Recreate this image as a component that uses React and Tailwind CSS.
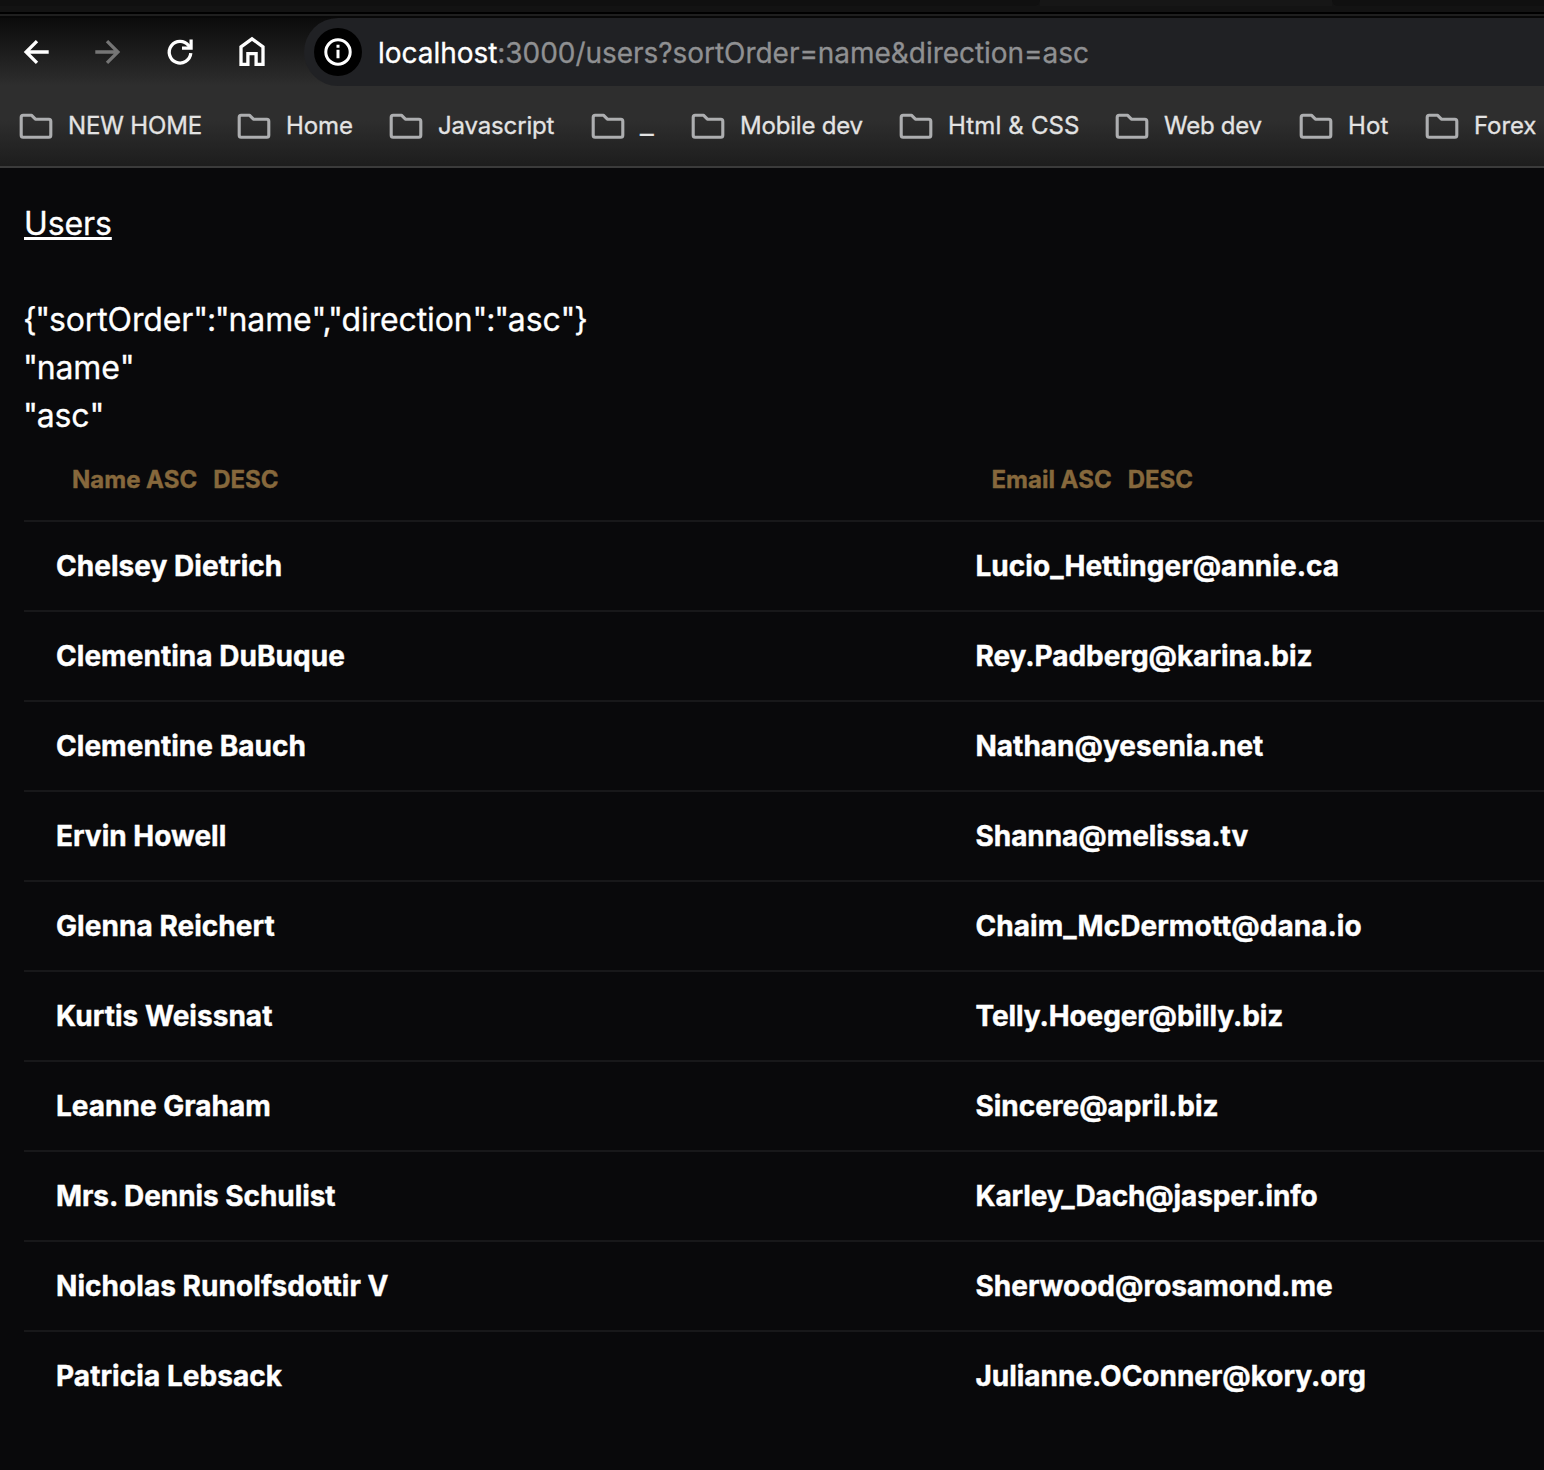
const bookmarks = [
  { label: 'NEW HOME', box: 'w-[218px]', text: 'tracking-[-0.15px]' },
  { label: 'Home', box: 'w-[152px]', text: 'tracking-[-0.1px]' },
  { label: 'Javascript', box: 'w-[202px]', text: 'tracking-[-0.15px]' },
  { label: '_', box: 'w-[100px]', text: 'origin-left scale-x-125' },
  { label: 'Mobile dev', box: 'w-[208px]', text: 'tracking-[-0.2px]' },
  { label: 'Html & CSS', box: 'w-[216px]', text: 'tracking-[0.15px]' },
  { label: 'Web dev', box: 'w-[184px]', text: 'tracking-[-0.25px]' },
  { label: 'Hot', box: 'w-[126px]', text: 'tracking-[0.15px]' },
  { label: 'Forex', box: 'w-[118px]', text: 'tracking-[-0.1px]' },
];

const users = [
  ['Chelsey Dietrich', 'Lucio_Hettinger@annie.ca', 'tracking-[0.04px]', 'tracking-[0.03px]'],
  ['Clementina DuBuque', 'Rey.Padberg@karina.biz', 'tracking-[0.04px]', 'tracking-[-0.06px]'],
  ['Clementine Bauch', 'Nathan@yesenia.net', 'tracking-[0.04px]', 'tracking-normal'],
  ['Ervin Howell', 'Shanna@melissa.tv', 'tracking-normal', 'tracking-[-0.06px]'],
  ['Glenna Reichert', 'Chaim_McDermott@dana.io', 'tracking-[0.05px]', 'tracking-[0.04px]'],
  ['Kurtis Weissnat', 'Telly.Hoeger@billy.biz', 'tracking-[0.03px]', 'tracking-[-0.1px]'],
  ['Leanne Graham', 'Sincere@april.biz', 'tracking-normal', 'tracking-[-0.04px]'],
  ['Mrs. Dennis Schulist', 'Karley_Dach@jasper.info', 'tracking-[-0.06px]', 'tracking-[-0.14px]'],
  ['Nicholas Runolfsdottir V', 'Sherwood@rosamond.me', 'tracking-[0.05px]', 'tracking-normal'],
  ['Patricia Lebsack', 'Julianne.OConner@kory.org', 'tracking-[0.05px]', 'tracking-[-0.03px]'],
];

function Icon({ children, className = '' }) {
  return (
    <svg viewBox="0 0 32 32" className={`size-8 shrink-0 ${className}`} fill="none" stroke="currentColor" strokeWidth="3.3">
      {children}
    </svg>
  );
}

function FolderIcon() {
  return (
    <svg viewBox="0 0 34 26" className="h-[26px] w-[34px] shrink-0 text-[#adaeb0]" fill="none" stroke="currentColor" strokeWidth="3.1" strokeLinejoin="round">
      <path d="M4.1 2.2h8.3l4 4h13.5q1.9 0 1.9 2v14q0 2-1.9 2H4.1q-1.9 0-1.9-2v-18q0-2 1.9-2z" />
    </svg>
  );
}

function TabStrip() {
  return (
    <div className="h-[18px] shrink-0 overflow-hidden">
      <div className="flex h-3 bg-[#131313]">
        <div className="h-1.5 w-[1040px] rounded-br-lg bg-[#101010]" />
        <div className="h-1.5 w-[292px] bg-[#161616]" />
        <div className="h-1.5 flex-1 rounded-bl-lg bg-[#101010]" />
      </div>
      <div className="h-0.5 bg-black" />
      <div className="h-0.5 bg-[#1f1f1f]" />
      <div className="h-0.5 bg-[#080808]" />
    </div>
  );
}

function Toolbar() {
  return (
    <div className="flex h-[68px] shrink-0 items-center text-white">
      <div className="flex w-[304px] shrink-0 gap-10 pl-5">
        <Icon>
          <path d="M28.7 16H6M17 5.1 6.1 16 17 26.9" />
        </Icon>
        <Icon className="text-[#757575]">
          <path d="M3.3 16H26M15 5.1 25.9 16 15 26.9" />
        </Icon>
        <Icon>
          <path d="M26.8 17.2A10.8 10.8 0 1 1 24.6 9.6L26 11.6" />
          <path d="M27.1 3.6v8.5H18" strokeWidth="3.2" />
        </Icon>
        <Icon>
          <path d="M5 28.3V10.9L16 2.8l11 8.1v17.4h-6.9V17.7h-8.2v10.6z" />
        </Icon>
      </div>
      <div className="flex h-full flex-1 items-center rounded-l-full bg-[#202124] pl-2.5">
        <div className="flex size-12 shrink-0 items-center justify-center rounded-full bg-black">
          <svg viewBox="0 0 28 28" className="size-7" fill="none" stroke="white" strokeWidth="3">
            <circle cx="14" cy="14" r="12.2" />
            <path d="M14 11.8v8.5M14 6.8v3" />
          </svg>
        </div>
        <div className="mt-0.5 ml-4 whitespace-nowrap text-[28px] leading-8 tracking-[-0.04px] text-[#8f9092] [-webkit-text-stroke:0.3px]">
          <span className="text-white">localhost</span>:3000/users?sortOrder=name&amp;direction=asc
        </div>
      </div>
    </div>
  );
}

function BookmarksBar() {
  return (
    <div className="flex h-20 shrink-0 items-center overflow-hidden pl-[19px]">
      {bookmarks.map((b) => (
        <div key={b.label} className={`flex shrink-0 items-center ${b.box}`}>
          <FolderIcon />
          <span className={`ml-[15px] whitespace-nowrap text-2xl leading-7 text-[#e3e3e3] [-webkit-text-stroke:0.3px] ${b.text}`}>{b.label}</span>
        </div>
      ))}
    </div>
  );
}

function Json({ value }) {
  return (
    <p className="-ml-px">
      {JSON.stringify(value).split(/([a-zA-Z]+)/).map((part, i) => (
        <span key={i} className={i % 2 ? 'tracking-[-0.12px]' : 'tracking-[-1.28px]'}>{part}</span>
      ))}
    </p>
  );
}

function SortHeader({ label }) {
  return (
    <div className="flex gap-4 pl-12 text-2xl leading-8 font-bold text-[#86683c] [-webkit-text-stroke:0.4px]">
      <span>{label} ASC</span>
      <span>DESC</span>
    </div>
  );
}

export default function App() {
  return (
    <div className="flex h-[1470px] w-[1544px] flex-col overflow-hidden bg-[#09090b] font-['Inter',sans-serif] text-white">
      <TabStrip />
      <header className="h-[150px] shrink-0 border-b-2 border-[#3b3b3b] bg-[linear-gradient(#0b0b0b_0px,#2e2e2e_68px,#2e2e2e_102px,#1d1d1d_148px)]">
        <Toolbar />
        <BookmarksBar />
      </header>
      <main className="pl-6">
        <a className="mt-8 block w-fit text-[32px] leading-[48px] tracking-[-0.1px] underline [-webkit-text-stroke:0.3px]">Users</a>
        <div className="mt-12 text-[32px] leading-[48px] [-webkit-text-stroke:0.3px]">
          <Json value={{ sortOrder: 'name', direction: 'asc' }} />
          <Json value="name" />
          <Json value="asc" />
        </div>
        <div className="grid h-[82px] grid-cols-[919.5px_1fr] items-center border-b-2 border-[#18181a]">
          <SortHeader label="Name" />
          <SortHeader label="Email" />
        </div>
        {users.map(([name, email, nameTracking, emailTracking]) => (
          <div key={name} className="grid h-[90px] grid-cols-[919.5px_1fr] items-center border-b-2 border-[#18181a] text-[28px] leading-10 font-bold [-webkit-text-stroke:0.4px] last:border-transparent">
            <span className={`pl-8 ${nameTracking}`}>{name}</span>
            <span className={`pl-8 ${emailTracking}`}>{email}</span>
          </div>
        ))}
      </main>
    </div>
  );
}
